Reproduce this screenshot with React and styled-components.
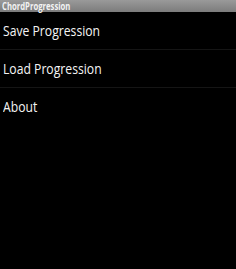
import React from "react";
import styled, { createGlobalStyle } from "styled-components";

const Global = createGlobalStyle`
  html, body { margin: 0; padding: 0; background: #000; }
  body { width: 236px; height: 269px; overflow: hidden; }
`;

const Screen = styled.div`
  width: 236px;
  height: 269px;
  background: #000;
  display: flex;
  flex-direction: column;
  font-family: "Open Sans", "Noto Sans", sans-serif;
`;

const TitleBar = styled.div`
  height: 12px;
  background: linear-gradient(#9a9a9a, #7c7c7c);
  padding-left: 2px;
  display: flex;
  align-items: center;
`;

const TitleText = styled.span`
  color: #f2f2f2;
  font-weight: 700;
  font-size: 10px;
  line-height: 12px;
  white-space: nowrap;
  transform: scaleX(0.77);
  transform-origin: left center;
`;

const Menu = styled.div`
  display: flex;
  flex-direction: column;
`;

const Item = styled.div`
  height: 37px;
  display: flex;
  align-items: center;
  padding-left: 3px;
  border-bottom: 1px solid ${(p) => (p.$last ? "transparent" : "#151515")};
`;

const Label = styled.span`
  color: #f4f4f4;
  font-size: 14.5px;
  white-space: nowrap;
  transform: scaleX(0.84);
  transform-origin: left center;
`;

export default function App() {
  const items = ["Save Progression", "Load Progression", "About"];
  return (
    <Screen>
      <Global />
      <TitleBar>
        <TitleText>ChordProgression</TitleText>
      </TitleBar>
      <Menu>
        {items.map((t, i) => (
          <Item key={t} $last={i === items.length - 1}>
            <Label>{t}</Label>
          </Item>
        ))}
      </Menu>
    </Screen>
  );
}
